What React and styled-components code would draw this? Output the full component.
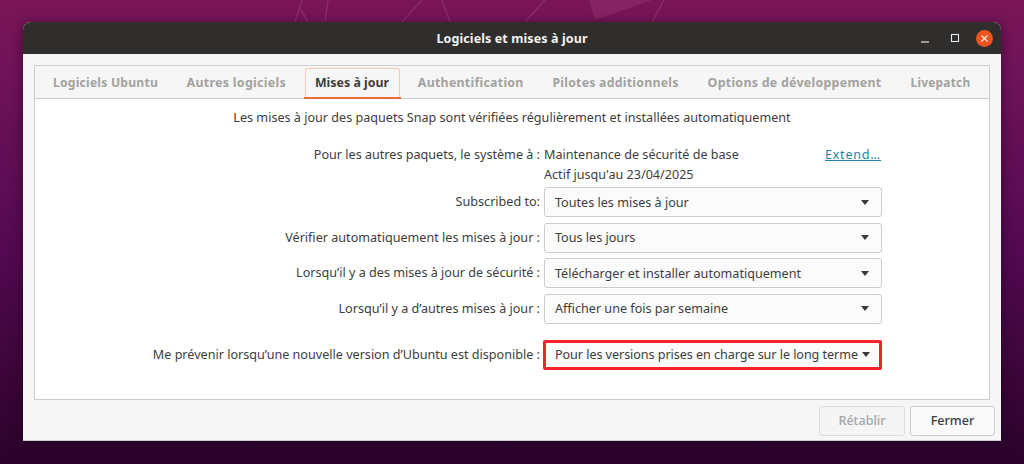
import React from 'react';
import styled, { createGlobalStyle } from 'styled-components';

const Global = createGlobalStyle`
  html, body { margin: 0; padding: 0; background: #2e0430; }
  * { box-sizing: border-box; }
`;
const FONT = `"Noto Sans", "Open Sans", sans-serif`;

const Desktop = styled.div`
  position: relative; width: 1024px; height: 464px; overflow: hidden;
  padding: 22px 23px 23px;
  background: linear-gradient(180deg, #7a1556 0%, #70135a 15%, #52094f 55%, #3a0538 82%, #2b032c 100%);
  font-family: ${FONT};
`;
const Wallpaper = styled.svg`
  position: absolute; inset: 0; width: 100%; height: 100%;
`;
const Window = styled.div`
  position: relative; height: 419px; display: flex; flex-direction: column;
  background: #f6f6f6; border-radius: 8px 8px 0 0;
  box-shadow: 0 2px 12px rgba(20,0,20,.55); border-bottom: 1px solid #cfcfcf;
`;
const TitleBar = styled.div`
  position: relative; height: 32px; flex: none; display: flex; align-items: center; justify-content: center;
  background: #2f2e2c; border-radius: 8px 8px 0 0;
`;
const Title = styled.div`
  color: #f2f2f2; font-size: 12.5px; font-weight: 700; letter-spacing: .1px;
`;
const Controls = styled.div`
  position: absolute; right: 8px; top: 0; height: 32px; display: flex; align-items: center; gap: 13px;
`;
const CtrlBtn = styled.div`
  width: 17px; height: 17px; display: flex; align-items: center; justify-content: center;
  border-radius: 50%; background: ${p => p.$close ? '#e95420' : 'transparent'};
`;
const Notebook = styled.div`
  margin: 11px 11px 0; height: 335px; flex: none; display: flex; flex-direction: column;
  border: 1px solid #cdcdcd; background: #fff;
`;
const TabBar = styled.div`
  height: 33px; flex: none; display: flex; background: #f6f6f6; border-bottom: 1px solid #cdcdcd;
  padding-left: 4px;
`;
const Tab = styled.div`
  position: relative; height: 32px; display: flex; align-items: center; justify-content: center;
  width: ${p => p.$w}px; flex: none;
  font-size: ${p => p.$size}px; font-weight: 700; letter-spacing: ${p => p.$active ? '0' : '.25px'};
  color: ${p => p.$active ? '#3d3d3d' : '#a2a2a0'};
  ${p => p.$active && `
    &::before { content: ''; position: absolute; left: 4px; right: 4px; top: 2px; bottom: 0;
      border: 1px solid #f5c9b8; border-bottom: 0; border-radius: 3px 3px 0 0; }
    &::after { content: ''; position: absolute; left: 3px; right: 3px; bottom: -1px; height: 2px; background: #ea6b3c; }
  `}
`;
const Page = styled.div`
  flex: 1; display: flex; flex-direction: column;
`;
const Notice = styled.div`
  height: 37px; display: flex; align-items: center; justify-content: center;
  font-size: 12.6px; color: #3d3d3d; padding-bottom: 1px;
`;
const Form = styled.div`
  display: grid; grid-template-columns: 505px 338px; column-gap: 4px; margin-top: 9px;
`;
const Label = styled.div`
  text-align: right; font-size: 12.6px; color: #3d3d3d; line-height: ${p => p.$h || 30}px;
  height: ${p => p.$h || 30}px; white-space: nowrap;
  margin-top: ${p => p.$mt || 0}px;
`;
const Info = styled.div`
  display: flex; justify-content: space-between; font-size: 12.6px; color: #3d3d3d;
  line-height: ${p => p.$h}px; height: ${p => p.$h}px; padding-right: 1px;
`;
const Link = styled.a`
  color: #1f86a8; text-decoration: underline; font-size: 12.6px; letter-spacing: .75px;
`;
const Select = styled.div`
  position: relative; height: 30px; display: flex; align-items: center; justify-content: space-between;
  padding: 0 12px 0 10px; margin-top: ${p => p.$mt || 0}px;
  border: 1px solid #cdcdcd; border-radius: 3px; background: #fbfbfb; font-size: 12.6px; color: #3d3d3d;
  white-space: nowrap; letter-spacing: ${p => p.$tight ? '-.06px' : '0'};
`;
const Arrow = styled.span`
  width: 0; height: 0; border-left: 4.5px solid transparent; border-right: 4.5px solid transparent;
  border-top: 5px solid #3a3a3a; flex: none; margin-left: 4px;
`;
const Highlight = styled.div`
  position: absolute; inset: -1px -1px -1px -2px; border: 3px solid #f5222d; border-radius: 2px;
`;
const Footer = styled.div`
  flex: 1; display: flex; justify-content: flex-end; align-items: center; gap: 5px; padding: 1px 6px 0 0;
`;
const Button = styled.div`
  width: ${p => p.$w}px; height: 30px; display: flex; align-items: center; justify-content: center;
  border: 1px solid ${p => p.$disabled ? '#dcdcdc' : '#cdcdcd'}; border-radius: 3px;
  background: ${p => p.$disabled ? '#f5f5f5' : '#fafafa'}; font-size: 12.6px; font-weight: 500;
  color: ${p => p.$disabled ? '#a5a5a5' : '#3d3d3d'};
`;

const tabs = [
  ['Logiciels Ubuntu', 133, 12.1], ['Autres logiciels', 128.5, 12.5], ['Mises à jour', 103, 12.4, true],
  ['Authentification', 134.5, 12.4], ['Pilotes additionnels', 155, 12.3], ['Options de développement', 203, 12.45], ['Livepatch', 89, 11.9],
];
const rows = [
  ['Subscribed to:', 'Toutes les mises à jour'],
  ['Vérifier automatiquement les mises à jour :', 'Tous les jours'],
  ['Lorsqu’il y a des mises à jour de sécurité :', 'Télécharger et installer automatiquement'],
  ['Lorsqu’il y a d’autres mises à jour :', 'Afficher une fois par semaine'],
];

export default function App() {
  return (
    <Desktop>
      <Global />
      <Wallpaper viewBox="0 0 1024 464">
        <g stroke="#a0407c" strokeWidth="1.5" fill="none" opacity=".5">
          <path d="M295 22 L302 0 M301 10 L308 22 M325 22 L328 0 M402 22 L422 0 M450 22 L442 0" />
          <path d="M525 22 L545 0 M652 22 L664 0" />
        </g>
        <path d="M589 0 L652 0 L595 20 Z" fill="#a0407c" opacity=".35" />
      </Wallpaper>
      <Window>
        <TitleBar>
          <Title>Logiciels et mises à jour</Title>
          <Controls>
            <CtrlBtn>
              <svg width="10" height="10" viewBox="0 0 10 10"><path d="M1 9 H9" stroke="#e8e8e8" strokeWidth="1.2" /></svg>
            </CtrlBtn>
            <CtrlBtn>
              <svg width="10" height="10" viewBox="0 0 10 10"><rect x="1.5" y="1.5" width="7" height="7" fill="none" stroke="#e8e8e8" strokeWidth="1.1" /></svg>
            </CtrlBtn>
            <CtrlBtn $close>
              <svg width="9" height="9" viewBox="0 0 9 9"><path d="M1.5 1.5 L7.5 7.5 M7.5 1.5 L1.5 7.5" stroke="#fbe3da" strokeWidth="1.3" /></svg>
            </CtrlBtn>
          </Controls>
        </TitleBar>
        <Notebook>
          <TabBar>
            {tabs.map(([t, w, s, a]) => <Tab key={t} $w={w} $size={s} $active={a}>{t}</Tab>)}
          </TabBar>
          <Page>
            <Notice>Les mises à jour des paquets Snap sont vérifiées régulièrement et installées automatiquement</Notice>
            <Form>
              <Label $h={20}>Pour les autres paquets, le système à :</Label>
              <Info $h={20}><span>Maintenance de sécurité de base</span><Link>Extend…</Link></Info>
              <span />
              <Info $h={20}><span>Actif jusqu'au 23/04/2025</span></Info>
              {rows.map(([l, v], i) => (
                <React.Fragment key={l}>
                  <Label $mt={i ? 5.5 : 2}>{l}</Label>
                  <Select $mt={i ? 5.5 : 2}>{v}<Arrow /></Select>
                </React.Fragment>
              ))}
              <Label $mt={16}>Me prévenir lorsqu’une nouvelle version d’Ubuntu est disponible :</Label>
              <Select $mt={16} $tight>Pour les versions prises en charge sur le long terme<Arrow /><Highlight /></Select>
            </Form>
          </Page>
        </Notebook>
        <Footer>
          <Button $w={86} $disabled>Rétablir</Button>
          <Button $w={85}>Fermer</Button>
        </Footer>
      </Window>
    </Desktop>
  );
}
